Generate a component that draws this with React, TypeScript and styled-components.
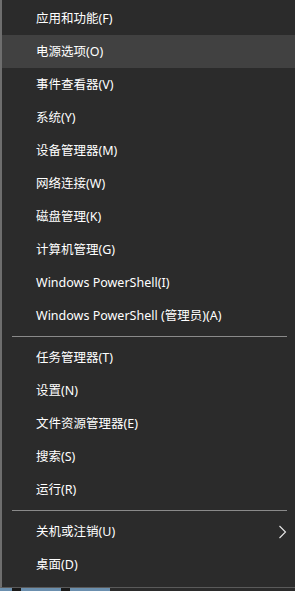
import React from "react";
import styled, { createGlobalStyle } from "styled-components";

const GlobalStyle = createGlobalStyle`
  html, body {
    margin: 0;
    padding: 0;
    background: #2b2b2b;
  }
  body {
    font-family: "Noto Sans", "Noto Sans CJK SC", sans-serif;
  }
`;

const Screen = styled.div`
  width: 295px;
  height: 591px;
  display: flex;
  flex-direction: column;
  overflow: hidden;
`;

const Menu = styled.ul`
  list-style: none;
  margin: 0;
  padding: 2px 0 0;
  height: 588px;
  box-sizing: border-box;
  background: #2b2b2b;
  border-left: 2px solid #6e6e6e;
  border-bottom: 1px solid #5a5a5a;
  display: flex;
  flex-direction: column;
`;

const Item = styled.li<{ $active?: boolean }>`
  height: 33px;
  flex-shrink: 0;
  display: flex;
  align-items: center;
  justify-content: space-between;
  padding: 1px 8px 0 34px;
  box-sizing: border-box;
  background: ${(p) => (p.$active ? "#414141" : "transparent")};
  color: #ffffff;
  font-size: 12.5px;
  line-height: 1;
`;

const Separator = styled.li`
  height: 9px;
  flex-shrink: 0;
  display: flex;
  align-items: center;
  padding: 0 8px 0 10px;

  &::after {
    content: "";
    flex: 1;
    height: 1px;
    background: #8a8a8a;
  }
`;

const Desktop = styled.div`
  flex: 1;
  display: flex;
`;

const Strip = styled.div<{ $w: number; $c: string }>`
  width: ${(p) => p.$w}px;
  background: ${(p) => p.$c};
`;

const Chevron = () => (
  <svg width="9" height="14" viewBox="0 0 9 14">
    <path d="M1.5 1 L7.5 7 L1.5 13" fill="none" stroke="#e6e6e6" strokeWidth="1.1" />
  </svg>
);

type Entry = { label: string; active?: boolean; submenu?: boolean } | "sep";

const entries: Entry[] = [
  { label: "应用和功能(F)" },
  { label: "电源选项(O)", active: true },
  { label: "事件查看器(V)" },
  { label: "系统(Y)" },
  { label: "设备管理器(M)" },
  { label: "网络连接(W)" },
  { label: "磁盘管理(K)" },
  { label: "计算机管理(G)" },
  { label: "Windows PowerShell(I)" },
  { label: "Windows PowerShell (管理员)(A)" },
  "sep",
  { label: "任务管理器(T)" },
  { label: "设置(N)" },
  { label: "文件资源管理器(E)" },
  { label: "搜索(S)" },
  { label: "运行(R)" },
  "sep",
  { label: "关机或注销(U)", submenu: true },
  { label: "桌面(D)" },
];

export default function App() {
  return (
    <>
      <GlobalStyle />
      <Screen>
        <Menu>
          {entries.map((e, i) =>
            e === "sep" ? (
              <Separator key={i} />
            ) : (
              <Item key={i} $active={e.active}>
                <span>{e.label}</span>
                {e.submenu && <Chevron />}
              </Item>
            )
          )}
        </Menu>
        <Desktop>
          <Strip $w={12} $c="#6b8fae" />
          <Strip $w={9} $c="#1a1a1a" />
          <Strip $w={40} $c="#6b8fae" />
          <Strip $w={9} $c="#1a1a1a" />
          <Strip $w={40} $c="#6b8fae" />
          <Strip $w={185} $c="#2b2b2b" />
        </Desktop>
      </Screen>
    </>
  );
}
